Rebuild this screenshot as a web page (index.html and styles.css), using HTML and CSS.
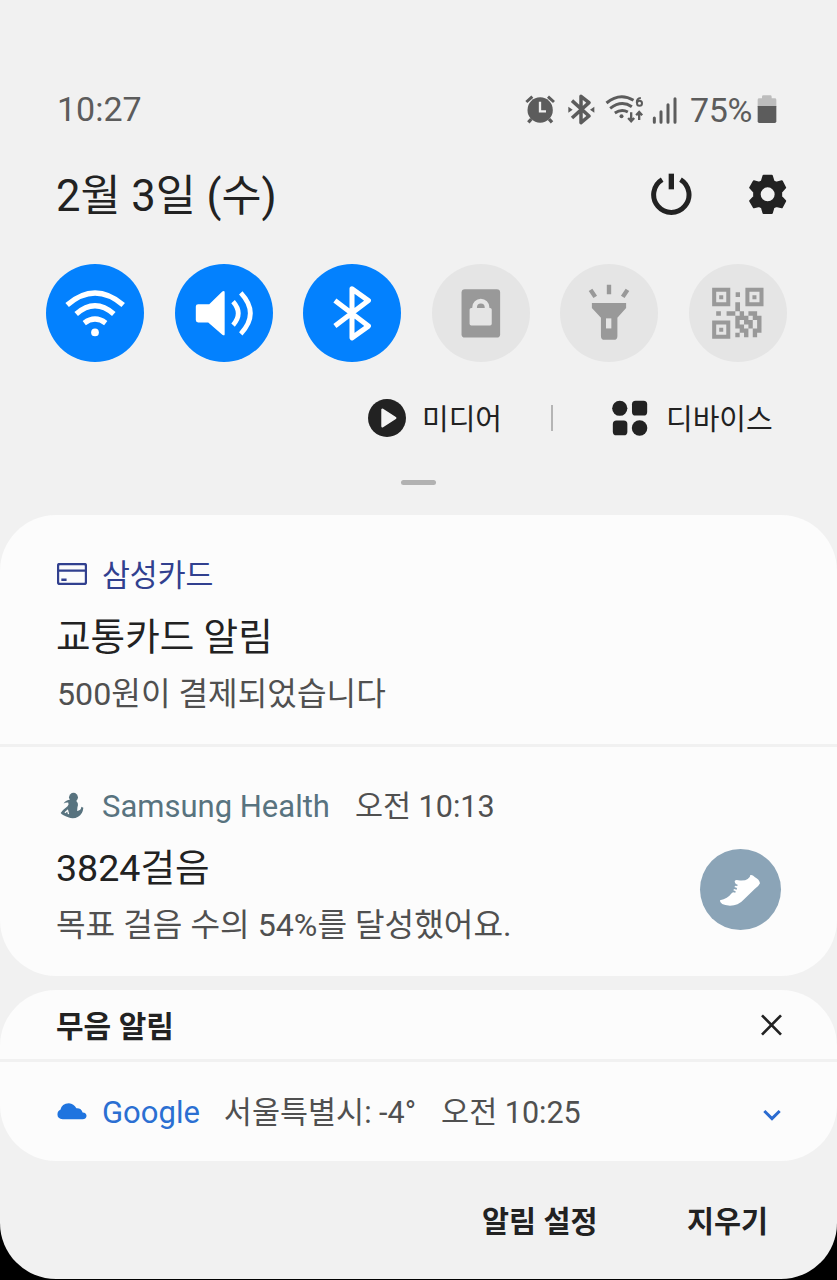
FILE: index.html
```html
<!DOCTYPE html>
<html lang="ko">
<head>
<meta charset="utf-8">
<title>알림</title>
<link rel="stylesheet" href="styles.css">
</head>
<body>
<main class="panel">
  <header class="status">
    <span class="clock">10:27</span>
    <div class="status-icons">
      <svg class="i-alarm" viewBox="45 36 90 96"><g fill="none" stroke="#5c5c5c" stroke-width="9"><path d="M49 63 67 47M132 63 114 47"/><path d="M64 114 55 124M117 114 126 124" stroke-width="10"/></g><circle cx="90.500" cy="87" r="38" fill="#5c5c5c"/><path d="M90 62V91H108" fill="none" stroke="#f1f1f1" stroke-width="7"/></svg>
      <svg class="i-bt" viewBox="170 36 84 96"><path d="M185 59 236 105 212 125V46L236 65 185 111" fill="none" stroke="#5c5c5c" stroke-width="10.500" stroke-linejoin="round"/><path d="M174 77 187 86 174 95ZM252 77 239 86 252 95Z" fill="#5c5c5c"/></svg>
      <svg class="i-wifi" viewBox="286 36 116 96"><g fill="none" stroke="#5c5c5c" stroke-width="9"><path d="M290 66Q330 33 371 58"/><path d="M301 82Q335 56 366 77"/><path d="M315 96Q335 83 354 93"/></g><circle cx="335" cy="106" r="6" fill="#5c5c5c"/><g fill="none" stroke="#5c5c5c" stroke-width="7"><path d="M364 94V120M355 111 364 121 373 111M388 117V95M379 103 388 93 397 103"/><path d="M393 51Q380 52 381 66" stroke-width="6"/><circle cx="389" cy="67" r="7.500" stroke-width="6"/></g></svg>
      <svg class="i-signal" viewBox="426 36 78 96"><path d="M433 111V124M453 92V124M474 71V124M495 53V124" stroke="#5c5c5c" stroke-width="9" stroke-linecap="round"/></svg>
      <span class="percent">75%</span>
      <svg class="i-battery" viewBox="742 36 60 96"><path d="M744 77V56Q744 52 749 52H757V47Q757 43 761 43H782Q786 43 786 47V52H795Q800 52 800 56V77Z" fill="#bdbdbd"/><path d="M744 75H800V121Q800 126 795 126H749Q744 126 744 121Z" fill="#5c5c5c"/></svg>
    </div>
  </header>

  <section class="date-row">
    <h1 class="date">2월 3일 (수)</h1>
    <div class="tools">
      <svg class="i-power" viewBox="62 36 128 132"><path d="M98 59A53 53 0 1 0 153 59" fill="none" stroke="#222" stroke-width="15"/><path d="M125.500 41V88" stroke="#222" stroke-width="16"/></svg>
      <svg class="i-gear" viewBox="350 36 122 132"><path fill="#222" fill-rule="evenodd" stroke="#222" stroke-width="6" stroke-linejoin="round" d="M399 47H424L429 64 437 68 454 64 464 83 452 96V110L464 123 454 142 437 138 429 142 424 159H399L394 142 386 138 370 142 359 123 371 110V96L359 83 370 64 386 68 394 64ZM411.500 79A24 24 0 1 0 411.500 127A24 24 0 1 0 411.500 79Z"/></svg>
    </div>
  </section>

  <nav class="quick">
    <div class="toggle on"><svg viewBox="20 27 292 292"><g fill="none" stroke="#fff" stroke-width="16"><path d="M83 149Q166 78 250 149"/><path d="M110 176Q166 127 222 176"/><path d="M134 203Q166 179 198 203"/></g><circle cx="166" cy="231" r="11.500" fill="#fff"/></svg></div>
    <div class="toggle on"><svg viewBox="406 27 292 292"><path d="M475 147H508L547 109Q554 105 554 112V236Q554 242 547 238L505 201H475Q468 201 468 194V154Q468 147 475 147Z" fill="#fff"/><path d="M579 139Q610 174 579 209M602 113Q659 174 602 235" fill="none" stroke="#fff" stroke-width="14"/></svg></div>
    <div class="toggle on"><svg viewBox="792 27 292 292"><path d="M887 136 987 212 938 247V101L987 136 887 212" fill="none" stroke="#fff" stroke-width="15" stroke-linejoin="round"/></svg></div>
    <div class="toggle"><svg viewBox="23 27 292 292"><rect x="111" y="102" width="115" height="144" rx="10" fill="#999"/><rect x="135" y="158" width="66" height="52" rx="5" fill="#e5e5e5"/><path d="M150 162V156A18.500 18.500 0 0 1 187 156V162" fill="none" stroke="#e5e5e5" stroke-width="14"/></svg></div>
    <div class="toggle"><svg viewBox="409 27 292 292"><path d="M504 143H606V158L580 187V242Q580 253 569 253H542Q531 253 531 242V187L504 158Z" fill="#999"/><path d="M546 189H562V219H546Z" fill="#e5e5e5"/><path d="M555 89V117M500 104 514 125M610 104 596 125" stroke="#999" stroke-width="13"/></svg></div>
    <div class="toggle"><svg viewBox="795 27 292 292"><g fill="none" stroke="#999" stroke-width="12"><path d="M870 104H912V147H870ZM969 104H1011V147H969ZM870 201H912V244H870Z"/></g><path fill="#999" d="M885 120h12v12h-12zM984 120h12v12h-12zM885 217h12v12h-12zM934 111h13v14h-13zM876 168h14v13h-14zM907 168h26v13h-26zM933 141h14v27h-14zM933 181h13v38h-13zM946 168h13v13h-13zM972 168h26v13h-26zM946 181h13v13h-13zM959 181h13v13h-13zM985 181h26v13h-26zM959 194h26v13h-26zM998 194h13v38h-13zM946 207h13v12h-13zM972 207h13v12h-13zM959 219h13v13h-13zM985 219h13v13h-13zM933 232h13v13h-13zM946 219h13v13h-13zM959 232h13v13h-13zM985 232h13v13h-13z"/></svg></div>
  </nav>

  <section class="shortcuts">
    <svg class="i-play" viewBox="23 41 113 113"><circle cx="79.500" cy="97.500" r="56.500" fill="#222"/><path d="M66 73V122L104 97.500Z" fill="#f4f4f4" stroke="#f4f4f4" stroke-width="7" stroke-linejoin="round"/></svg>
    <span class="media">미디어</span>
    <i class="bar"></i>
    <svg class="i-grid" viewBox="759 43 108 109"><g fill="#222"><circle cx="782" cy="68" r="23"/><rect x="819" y="45" width="46" height="45" rx="11"/><rect x="761" y="105" width="44" height="45" rx="11"/><circle cx="842" cy="128" r="23.500"/></g></svg>
    <span class="device">디바이스</span>
  </section>
  <div class="handle"></div>

  <section class="card">
    <article class="notice payment">
      <div class="app"><svg class="i-card" viewBox="171 155 91 67"><rect x="174" y="158" width="85" height="61" rx="5" fill="none" stroke="#31408f" stroke-width="7"/><path d="M174 178H259" stroke="#31408f" stroke-width="7"/><path d="M184 206H200" stroke="#31408f" stroke-width="7"/></svg><span class="name navy">삼성카드</span></div>
      <h2 class="title t-pay">교통카드 알림</h2>
      <p class="text x-pay">500원이 결제되었습니다</p>
    </article>
    <article class="notice health">
      <div class="health-body">
        <div class="app"><svg class="i-health" viewBox="171 33 91 85"><g fill="#58737f"><circle cx="221" cy="49" r="13.500"/><path d="M191 68Q200 55 214 57L228 59Q238 67 233 79L232 91Q244 89 245 78L251 81Q249 101 235 108Q221 117 205 110Q188 104 182 97Q189 86 203 76Q208 71 205 65Q198 64 191 68Z"/></g><path d="M195 96 203 89 206 100" fill="none" stroke="#fcfcfc" stroke-width="4"/></svg><span class="name latin teal">Samsung Health</span><span class="time">오전 10:13</span></div>
        <h2 class="title t-health">3824걸음</h2>
        <p class="text x-health">목표 걸음 수의 54%를 달성했어요.</p>
      </div>
      <div class="shoe"><svg viewBox="30 27 243 243"><path d="M90 181Q113 176 125 160L129 157 136 158 137 154 130 151 132 147 140 149 141 144 133 141 136 137 142 138 143 134Q134 132 134 123Q137 119 145 121Q165 123 173 117Q181 112 181 105Q187 103 195 112Q208 118 210 130Q207 138 194 147L160 180Q145 197 120 197Q88 196 90 181Z" fill="#fff"/></svg></div>
    </article>
  </section>

  <section class="card silent">
    <div class="silent-head"><h3 class="bold s-title">무음 알림</h3><svg class="i-close" viewBox="214 521 63 66"><path d="M217 525 274 583M274 525 217 583" stroke="#222" stroke-width="8"/></svg></div>
    <div class="weather"><svg class="i-cloud" viewBox="171 366 91 52"><path d="M188 416Q172 414 172 401Q172 390 181 387Q185 368 207 367Q222 368 230 382Q245 381 249 395Q261 396 261 406Q259 416 249 416Z" fill="#1f74df"/></svg><span class="name latin blue">Google</span><span class="city">서울특별시: -4°</span><span class="time">오전 10:25</span><svg class="i-down" viewBox="1028 148 54 36"><path d="M1032 154 1055 177 1078 154" fill="none" stroke="#2b6bd0" stroke-width="9"/></svg></div>
  </section>

  <footer class="actions"><span class="bold a-set">알림 설정</span><span class="bold a-clear">지우기</span></footer>
</main>
</body>
</html>
```
FILE: styles.css
```css
* { box-sizing: border-box; }
body {
  margin: 0;
  height: 1280px;
  overflow: hidden;
  background: #000;
  color: #222;
  font-family: Roboto, "Noto Sans CJK KR", sans-serif;
}
svg { display: block; flex: none; }
h1, h2, h3, p { margin: 0; font-weight: 400; }
span, h1, h2, h3, p { white-space: nowrap; }

.panel {
  height: 1279px;
  padding-top: 90px;
  background: #f1f1f1;
  border-radius: 0 0 56px 56px;
  overflow: hidden;
}

.status { display: flex; justify-content: space-between; height: 40px; line-height: 39px; padding: 0 60px 0 57px; color: #5c5c5c; font-size: 34px; }
.status-icons { display: flex; align-items: center; }
.status-icons svg { height: 32px; margin-top: -3px; }
.i-alarm { width: 30px; }
.i-bt { width: 28px; margin-left: 12px; }
.i-wifi { width: 39px; margin-left: 10px; }
.i-signal { width: 26px; margin-left: 8px; }
.percent { margin-left: 12px; width: 67px; letter-spacing: -.4px; }
.i-battery { width: 20px; }

.date-row { display: flex; justify-content: space-between; height: 60px; margin-top: 37px; padding: 0 49px 0 56px; }
.date { font-size: 43.5px; line-height: 60px; }
.tools { display: flex; gap: 54px; padding-top: 5px; }
.tools svg { height: 44px; }
.i-power { width: 43px; }
.i-gear { width: 41px; }

.quick { display: flex; justify-content: space-between; margin-top: 37px; padding: 0 50px 0 46px; }
.toggle { width: 98px; height: 98px; border-radius: 50%; background: #e5e5e5; }
.toggle.on { background: #0381fe; }
.toggle svg { width: 98px; height: 98px; }

.shortcuts { display: flex; align-items: center; height: 40px; margin-top: 36px; padding-left: 368px; font-size: 29px; line-height: 40px; }
.i-play { width: 38px; height: 38px; }
.media { width: 128px; margin: 3px 0 0 16px; }
.bar { width: 2px; height: 26px; margin-left: 1px; background: #b5b5b5; }
.i-grid { width: 36px; height: 36px; margin-left: 59px; }
.device { margin: 3px 0 0 18px; }
.handle { width: 35px; height: 5px; margin: 42px 0 0 400.5px; border-radius: 3px; background: #b2b2b2; }

.card { height: 461px; margin-top: 30px; background: #fcfcfc; border-radius: 56px; overflow: hidden; }
.notice { padding-left: 57px; }
.payment { height: 232px; padding-top: 41px; border-bottom: 3px solid #f1f1f1; }
.health { display: flex; justify-content: space-between; padding: 40px 56px 0 57px; }
.app { display: flex; align-items: center; height: 40px; font-size: 30.3px; line-height: 40px; }
.i-card { width: 30px; height: 22px; margin-top: -5px; }
.i-health { width: 30px; height: 28px; margin-top: -3px; }
.name { margin-left: 15px; }
.latin { font-size: 31px; }
.navy { color: #31408f; }
.teal { color: #58737f; }
.blue { color: #2b6fd2; }
.time { margin-left: 25px; color: #505050; font-size: 30.5px; }
.title { height: 50px; margin: 16px 0 0 -1px; font-size: 37.6px; line-height: 50px; }
.text { height: 40px; margin-top: 12px; color: #505050; font-size: 32.2px; line-height: 41px; }
.x-health { margin-left: -1px; }
.shoe { width: 81px; height: 81px; margin-top: 62px; border-radius: 50%; background: #8ba4b7; }
.shoe svg { width: 81px; height: 81px; }

.silent { height: 171px; margin-top: 14px; }
.silent-head { display: flex; align-items: center; justify-content: space-between; height: 72px; padding: 0 55px 0 56px; border-bottom: 3px solid #f1f1f1; }
.bold { font-size: 29.4px; font-weight: 700; line-height: 40px; }
.s-title { margin-top: 4px; font-size: 30px; }
.i-close { width: 21px; height: 22px; }
.weather { display: flex; align-items: center; height: 102px; padding: 0 56px 0 57px; font-size: 30.5px; line-height: 42px; }
.i-cloud { width: 30px; height: 17px; margin-top: -4px; }
.city { margin-left: 24px; color: #505050; }
.i-down { width: 18px; height: 12px; margin-left: auto; margin-top: 4px; }

.actions { display: flex; padding: 41px 0 0 482px; }
.a-set { width: 205px; }
```
